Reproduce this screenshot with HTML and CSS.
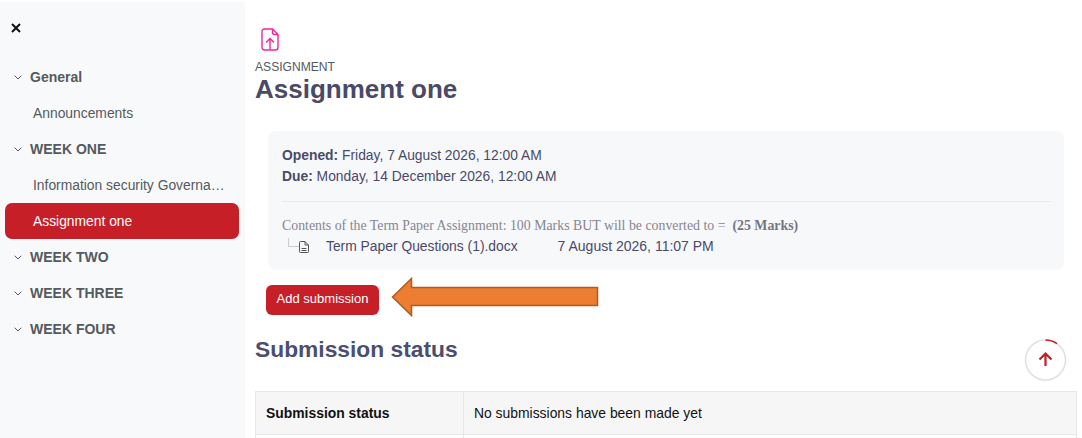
FILE: index.html
```html
<!DOCTYPE html>
<html lang="en">
<head>
<meta charset="utf-8">
<title>Assignment one</title>
<link rel="stylesheet" href="styles.css">
</head>
<body>
<div class="page">
  <aside class="sidebar">
    <button class="close" aria-label="Close"><svg width="10" height="10" viewBox="0 0 10 10"><path d="M1 1l8 8M9 1l-8 8" stroke="#111" stroke-width="2" fill="none"/></svg></button>
    <nav class="nav">
      <div class="section"><svg class="chev" viewBox="0 0 8 5"><path d="M.7.7L4 4l3.3-3.3" /></svg>General</div>
      <div class="item">Announcements</div>
      <div class="section"><svg class="chev" viewBox="0 0 8 5"><path d="M.7.7L4 4l3.3-3.3" /></svg>WEEK ONE</div>
      <div class="item">Information security Governa…</div>
      <div class="item active">Assignment one</div>
      <div class="section"><svg class="chev" viewBox="0 0 8 5"><path d="M.7.7L4 4l3.3-3.3" /></svg>WEEK TWO</div>
      <div class="section"><svg class="chev" viewBox="0 0 8 5"><path d="M.7.7L4 4l3.3-3.3" /></svg>WEEK THREE</div>
      <div class="section"><svg class="chev" viewBox="0 0 8 5"><path d="M.7.7L4 4l3.3-3.3" /></svg>WEEK FOUR</div>
    </nav>
  </aside>
  <main class="main">
    <svg class="assign-icon" width="18" height="23" viewBox="0 0 18 23" fill="none" stroke="#f5259b" stroke-width="1.4"><path d="M11.5 1H3.5A2.5 2.5 0 0 0 1 3.5v16A2.5 2.5 0 0 0 3.5 22h11a2.5 2.5 0 0 0 2.5-2.5V6.5zM11.5 1v3.5a2 2 0 0 0 2 2H17"/><path d="M9 21.500V10.500M5 14.500l4-4 4 4"/></svg>
    <div class="kicker">ASSIGNMENT</div>
    <h1 class="title">Assignment one</h1>
    <section class="info">
      <div class="dates">
        <div><b>Opened:</b> Friday, 7 August 2026, 12:00 AM</div>
        <div><b>Due:</b> Monday, 14 December 2026, 12:00 AM</div>
      </div>
      <div class="desc">Contents of the Term Paper Assignment: 100 Marks BUT will be converted to =&nbsp; <b>(25 Marks)</b></div>
      <div class="file">
        <svg class="tree" width="11" height="9" viewBox="0 0 11 9" fill="none" stroke="#c9cbd0"><path d="M.5 0v8.500H11"/></svg>
        <svg class="doc" width="10" height="12" viewBox="0 0 10 12" fill="none" stroke="#555" stroke-width="1"><path d="M6 .5H1.500a1 1 0 0 0-1 1v9a1 1 0 0 0 1 1h7a1 1 0 0 0 1-1V4zM6 .5V4h3.500M2.500 7.500h5M2.500 9.500h5"/></svg>
        <span class="fname">Term Paper Questions (1).docx</span>
        <span class="fdate">7 August 2026, 11:07 PM</span>
      </div>
    </section>
    <button class="submit">Add submission</button>
    <h2 class="status-title">Submission status</h2>
    <table class="status">
      <tr><th>Submission status</th><td>No submissions have been made yet</td></tr>
      <tr><th>&nbsp;</th><td>&nbsp;</td></tr>
    </table>
    <svg class="arrow" width="210" height="40" viewBox="0 0 210 40"><path d="M1.500 20L20.500 1.500V10.500H206.500V28.500H20.500V38.500Z" fill="#ed7d31" stroke="#ae5a21" stroke-width="1.500"/></svg>
    <div class="totop"><svg width="44" height="44" viewBox="0 0 44 44" fill="none"><circle cx="21.500" cy="22" r="20" stroke="#e0e0e0" stroke-width="1.500"/><path d="M21.500 2A20 20 0 0 1 33 5.600" stroke="#c71f27" stroke-width="1.500"/><path d="M21.500 28V16M15.500 21.500l6-6 6 6" stroke="#c71f27" stroke-width="2.200"/></svg></div>
  </main>
</div>
</body>
</html>
```
FILE: styles.css
```css
* { box-sizing: border-box; }
html, body { margin: 0; height: 100%; }
body {
  width: 1082px; height: 438px; overflow: hidden; background: #fff;
  font-family: "Liberation Sans", Arial, sans-serif; font-size: 13.850px; color: #4a4a68;
}
.page { display: flex; height: 436px; margin-top: 2px; overflow: hidden; }
.sidebar { width: 245px; flex: none; background: #f8f9fa; padding: 0 6px 0 5px; }
.close { display: block; border: 0; background: none; padding: 0; margin: 21px 0 0 6px; height: 10px; width: 10px; line-height: 0; }
.nav { margin-top: 26px; }
.section { height: 36px; display: flex; align-items: center; font-size: 14px; font-weight: 700; color: #555a60; padding-left: 9px; }
.chev { width: 8px; height: 5px; margin-right: 8px; fill: none; stroke: #555a60; stroke-width: 1; }
.item { height: 36px; font-size: 13.850px; line-height: 37px; color: #555a60; padding-left: 28px; white-space: nowrap; }
.active { background: #c71f27; color: #fff; border-radius: 7px; }
.main { flex: 1; position: relative; padding: 26px 5px 0 10px; min-width: 0; }
.assign-icon { display: block; margin-left: 6px; }
.kicker { font-size: 12.100px; color: #555a60; line-height: 14px; margin-top: 9px; }
.title { font-size: 26px; font-weight: 700; margin: 0; line-height: 30px; color: #4a4a68; }
.info { background: #f7f8fa; border-radius: 8px; margin: 27px 13px 0 13px; padding: 14px 13px 0 14px; height: 139px; }
.dates { line-height: 21px; padding-bottom: 14px; border-bottom: 1px solid #e9ebee; }
.desc { font-family: "Liberation Serif", serif; font-size: 13.850px; color: #85868f; margin-top: 15px; line-height: 18px; }
.desc b { color: #75767f; }
.file { display: flex; align-items: center; height: 22px; }
.tree { flex: none; margin: -8px 0 0 6px; }
.doc { flex: none; margin-top: 2px; }
.fname { margin-left: 17px; font-size: 13.850px; }
.fdate { margin-left: 40px; font-size: 14px; }
.submit { display: block; margin: 15px 0 0 11px; width: 113px; height: 30px; background: #c71f27; color: #fff; border: 0; border-radius: 6px; font: 13px/28px "Liberation Sans", Arial, sans-serif; padding: 0 0 2px; }
.status-title { font-size: 22.800px; font-weight: 700; margin: 20px 0 0; line-height: 28px; color: #4c4e70; }
.status { border-collapse: collapse; width: 822px; margin-top: 28px; font-size: 13.900px; color: #111; }
.status th, .status td { border: 1px solid #e8e8e8; height: 43px; padding: 0 10px; text-align: left; }
.status th { width: 208px; background: #f6f6f6; }
.status td { background: #f6f6f6; }
.status tr + tr th, .status tr + tr td { background: #fff; }
.arrow { position: absolute; left: 146px; top: 275px; }
.totop { position: absolute; left: 779px; top: 336px; width: 44px; height: 44px; line-height: 0; }
```
